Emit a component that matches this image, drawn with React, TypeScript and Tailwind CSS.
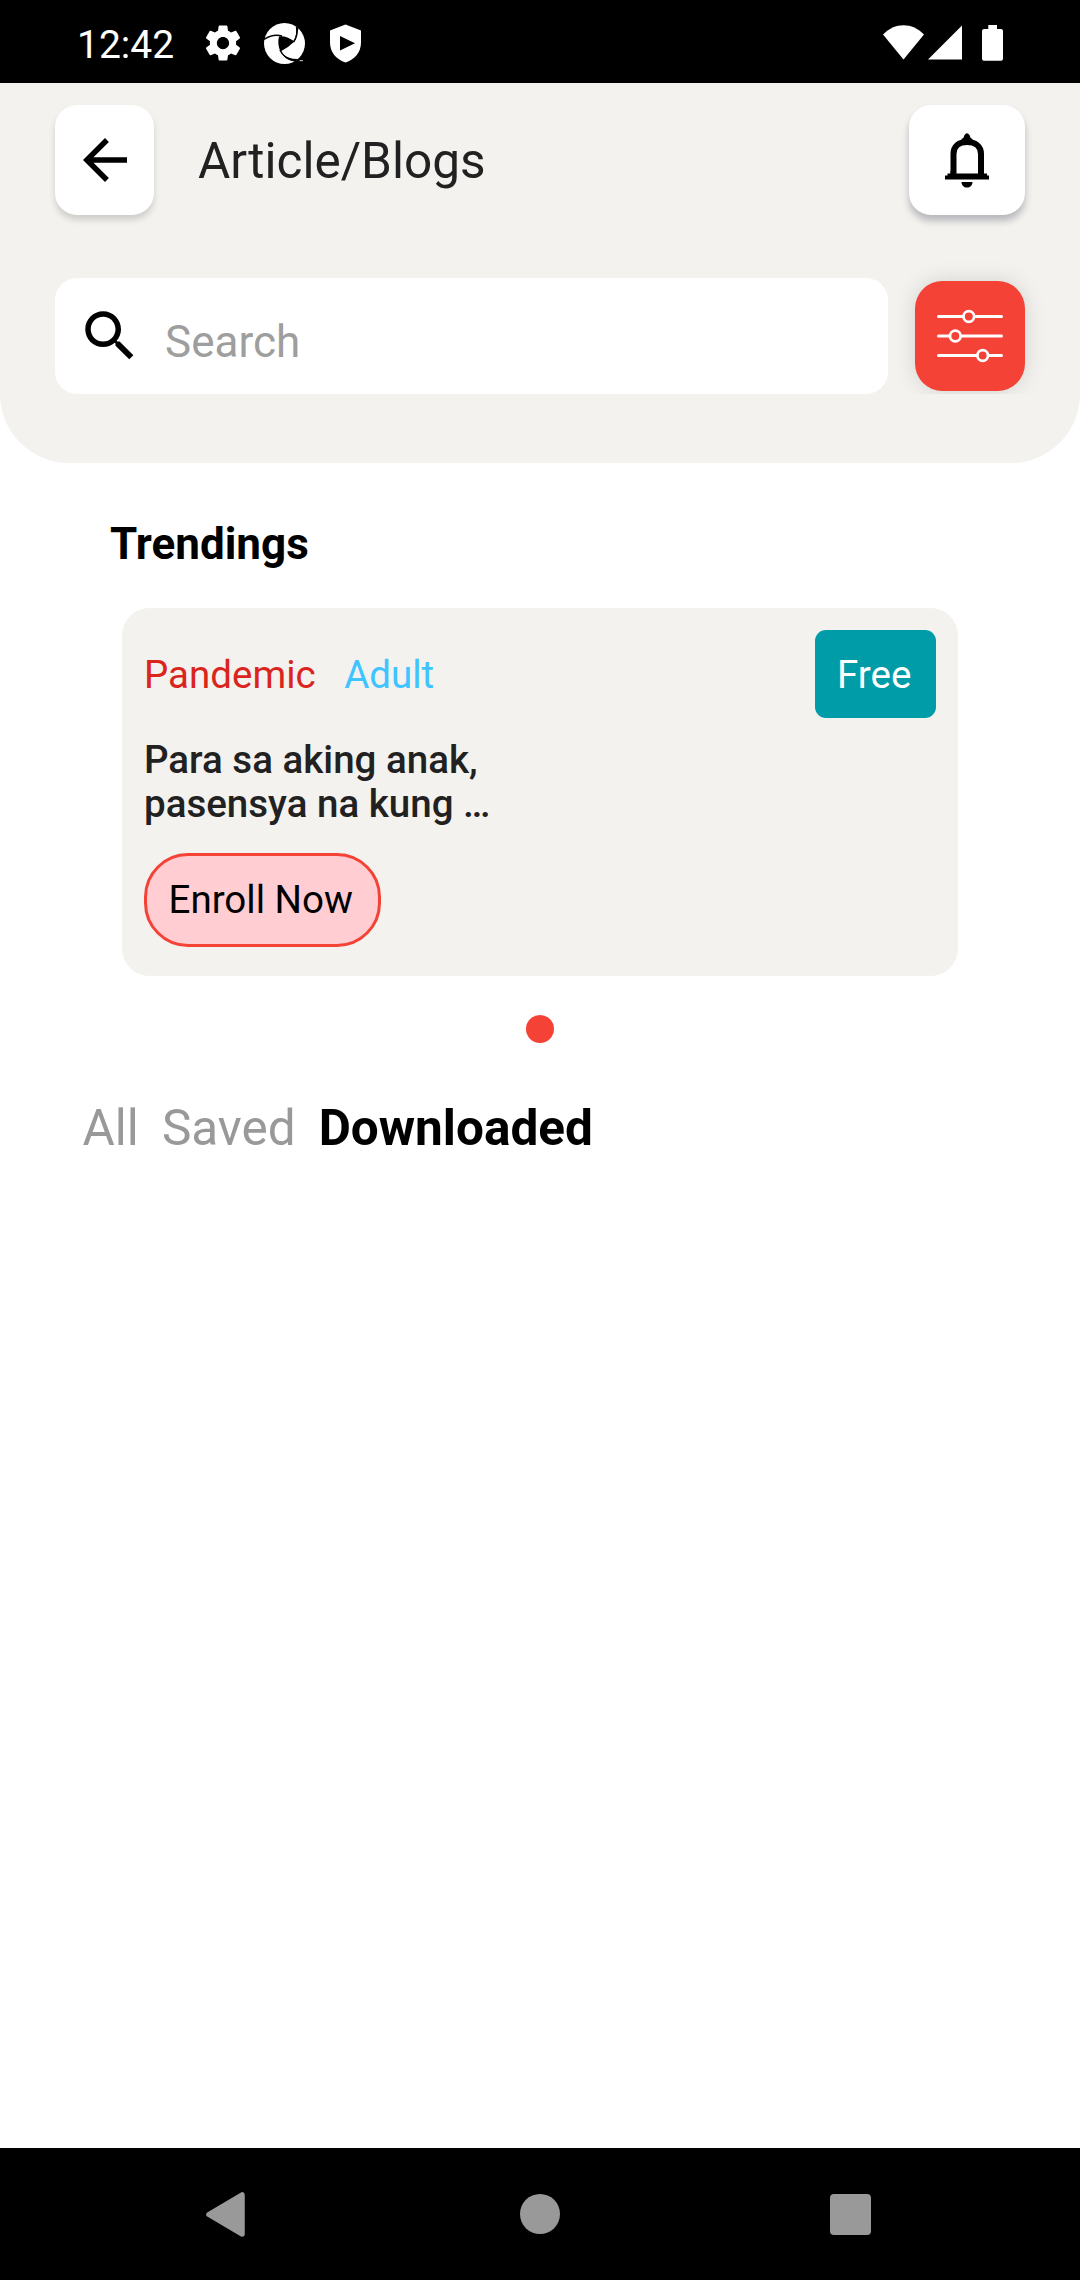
function StatusBar() {
  return (
    <div className="flex h-[83px] shrink-0 items-start bg-black text-white">
      <div className="ml-[77px] mt-[23px] w-[98px] text-[39px] leading-[45px] whitespace-nowrap">12:42</div>
      <svg className="ml-[27px] mt-[22px] h-[42px] w-[42px]" viewBox="0 0 24 24" fill="currentColor">
        <path d="M19.43 12.98c.04-.32.07-.64.07-.98s-.03-.66-.07-.98l2.11-1.65c.19-.15.24-.42.12-.64l-2-3.46c-.12-.22-.39-.3-.61-.22l-2.49 1c-.52-.4-1.08-.73-1.69-.98l-.38-2.65C14.46 2.18 14.25 2 14 2h-4c-.25 0-.46.18-.49.42l-.38 2.65c-.61.25-1.17.59-1.69.98l-2.49-1c-.23-.09-.49 0-.61.22l-2 3.46c-.13.22-.07.49.12.64l2.11 1.65c-.04.32-.07.65-.07.98s.03.66.07.98l-2.11 1.65c-.19.15-.24.42-.12.64l2 3.46c.12.22.39.3.61.22l2.49-1c.52.4 1.08.73 1.69.98l.38 2.65c.03.24.24.42.49.42h4c.25 0 .46-.18.49-.42l.38-2.65c.61-.25 1.17-.59 1.69-.98l2.49 1c.23.09.49 0 .61-.22l2-3.46c.12-.22.07-.49-.12-.64l-2.11-1.65zM12 15.5c-1.93 0-3.500-1.57-3.500-3.500s1.570-3.500 3.500-3.500 3.500 1.570 3.500 3.500-1.570 3.500-3.500 3.500z" />
      </svg>
      <svg className="ml-[20px] mt-[23px] h-[41px] w-[41px]" viewBox="0 0 41 41">
        <circle cx="20.500" cy="20.500" r="20.500" fill="#fff" />
        <path d="M15 13.500Q22 12.500 30.500 18.500Q25 24 16.500 28.500Q13 21 15 13.500Z" fill="#000" />
        <g fill="none" stroke="#000" strokeWidth="1.500">
          <path d="M0 16.500Q9 10.500 18 13" />
          <path d="M32.500 4Q34.500 12 29.500 19" />
          <path d="M16 27Q20 36 31.500 38" />
        </g>
        <path d="M32 4L34.500 5.500L31.500 17L30 18Q33 11 32 4Z" fill="#000" />
        <path d="M18 30Q23 36 34 36L31 38.500Q21 37 18 30Z" fill="#000" />
        <rect x="35.500" y="37" width="3.500" height="1.200" fill="#aaa" />
      </svg>
      <svg className="ml-[25px] mt-[24px] h-[39px] w-[31px]" viewBox="0 0 31 39">
        <path d="M15.500.5L31 6.500V18.500C31 28.500 24.500 35.500 15.500 38.500C6.500 35.500 0 28.500 0 18.500V6.500Z" fill="#fff" />
        <path d="M10 12L25 19.300L10 26.500Z" fill="#000" />
      </svg>
      <div className="grow" />
      <svg className="mt-[25px] h-[35px] w-[41px]" viewBox="0 0 41 35">
        <path d="M0 9.500C11.500-3 29.500-3 41 9.500L20.500 34.500Z" fill="#fff" />
      </svg>
      <svg className="ml-[4px] mt-[25px] h-[35px] w-[34px]" viewBox="0 0 34 35">
        <path d="M0 34.500L34 .5V34.500Z" fill="#fff" />
      </svg>
      <svg className="ml-[20px] mr-[77px] mt-[25px] h-[36px] w-[21px]" viewBox="0 0 21 36">
        <path d="M6.300 0H15V4H19a2 2 0 0 1 2 2V33.700a2 2 0 0 1-2 2H2a2 2 0 0 1-2-2V6a2 2 0 0 1 2-2H6.300Z" fill="#fff" />
      </svg>
    </div>
  );
}

function Header() {
  return (
    <header className="h-[379.5px] shrink-0 rounded-b-[69px] bg-[#f3f2ee] px-[55px] pt-[22px]">
      <div className="flex h-[110px] items-center">
        <button className="flex h-[110px] w-[99px] items-center justify-center rounded-[22px] bg-white shadow-[0_5px_6px_rgba(0,0,0,0.15)]">
          <svg className="h-[66px] w-[66px]" viewBox="0 0 24 24">
            <path d="M20 11H7.830l5.590-5.590L12 4l-8 8 8 8 1.410-1.410L7.830 13H20v-2z" />
          </svg>
        </button>
        <h1 className="ml-[44px] pt-[2px] text-[49.5px] leading-[58px] text-[#212121]">Article/Blogs</h1>
        <button className="ml-auto flex h-[110px] w-[116px] items-center justify-center rounded-[22px] bg-white shadow-[0_6px_7px_rgba(20,20,50,0.26)]">
          <svg className="h-[56px] w-[44px]" viewBox="0 0 44 56">
            <path d="M8.500 43V22C8.500 14 14 10 22 10S36 14 36 22V43" fill="none" stroke="#000" strokeWidth="6" />
            <path d="M16.500 10V7Q19 6 19.500 3Q22-.5 24.500 3Q25 6 27.500 7V10Z" />
            <path d="M0 47.500V43.500H2.500V41.500H5.500V39H10V41.500H34V39H38.500V41.500H42V43.500H44.500V47.500Z" />
            <path d="M16.500 50H27.500C27.500 53.500 25 55.500 22 55.500S16.500 53.500 16.500 50Z" />
          </svg>
        </button>
      </div>
      <div className="-mx-[55px] mt-[43px] flex h-[136px] items-start overflow-hidden px-[55px] pt-[20px]">
        <label className="flex h-[115.5px] w-[832.5px] items-start rounded-[22px] bg-white">
          <svg className="ml-[22px] mt-[25px] h-[66px] w-[66px] shrink-0" viewBox="0 0 24 24">
            <path d="M15.500 14h-.79l-.28-.27C15.410 12.590 16 11.110 16 9.500 16 5.910 13.090 3 9.500 3S3 5.910 3 9.500 5.910 16 9.500 16c1.610 0 3.090-.59 4.230-1.570l.27.28v.79l5 4.990L20.490 19l-4.990-5zm-6 0C7.010 14 5 11.990 5 9.500S7.010 5 9.500 5 14 7.010 14 9.500 11.990 14 9.500 14z" />
          </svg>
          <input
            className="ml-[22px] mt-[38px] h-[52px] w-[600px] bg-transparent text-[44px] leading-[52px] outline-none placeholder:text-[#9e9e9e]"
            placeholder="Search"
          />
        </label>
        <button className="ml-[27.5px] mt-[3px] h-[110px] w-[110px] rounded-[27.5px] bg-[#f44336] shadow-[0_0_22px_rgba(0,0,0,0.13)]">
          <svg className="h-[110px] w-[110px]" viewBox="0 0 110 110" fill="#f44336" stroke="#fff">
            <path d="M23.500 35.500H86.500M23.500 55H86.500M23.500 74.500H86.500" strokeWidth="3" strokeLinecap="round" />
            <g strokeWidth="2.700">
              <circle cx="53.800" cy="35.500" r="5.300" />
              <circle cx="40.300" cy="55" r="5.300" />
              <circle cx="67.700" cy="74.500" r="5.300" />
            </g>
          </svg>
        </button>
      </div>
    </header>
  );
}

function TrendingCard() {
  return (
    <article className="mx-[122px] mt-[38px] flex h-[368px] flex-col items-start rounded-[27.5px] bg-[#f3f2ee] px-[22px] pt-[22px] text-[38.5px] leading-[44px]">
      <div className="flex h-[88px] w-full items-center">
        <span className="pt-[2px] text-[#da251d]">Pandemic</span>
        <span className="ml-[28.5px] pt-[2px] text-[#40c4ff]">Adult</span>
        <span className="ml-auto flex h-[88px] w-[121px] items-center rounded-[11px] bg-[#009ca8] pt-[2px] pl-[22px] text-white">Free</span>
      </div>
      <p className="mt-[20px] w-[360px] font-medium text-[#212121]">
        Para sa aking anak,
        <br />
        pasensya na kung …
      </p>
      <button className="mt-[26.5px] flex h-[94px] w-[236.5px] items-center rounded-[44px] border-3 border-[#f44336] bg-[#ffcdd2] pl-[21.5px] text-black">
        Enroll Now
      </button>
    </article>
  );
}

function NavBar() {
  return (
    <nav className="mt-auto flex h-[132px] shrink-0 items-start bg-black">
      <svg className="ml-[206px] mt-[44px] h-[45px] w-[39px]" viewBox="0 0 39 45">
        <path d="M3 22.500L36 3V42Z" fill="#999" stroke="#999" strokeWidth="5.500" strokeLinejoin="round" />
      </svg>
      <div className="ml-[275px] mt-[46px] h-[40px] w-[40px] rounded-full bg-[#999]" />
      <div className="ml-[270px] mt-[46px] h-[41px] w-[41px] rounded-[4px] bg-[#999]" />
    </nav>
  );
}

export default function App() {
  return (
    <div className="flex h-[2280px] w-[1080px] flex-col overflow-hidden bg-white font-['Roboto',sans-serif]">
      <StatusBar />
      <Header />
      <h2 className="ml-[110px] mt-[55.5px] text-[44px] leading-[52px] font-bold text-black">Trendings</h2>
      <TrendingCard />
      <div className="mx-auto mt-[39px] h-[28px] w-[28px] rounded-full bg-[#f44336]" />
      <div className="ml-[82.5px] mt-[56px] flex gap-[23px] text-[49.5px] leading-[58px] text-[#999]">
        <span>All</span>
        <span>Saved</span>
        <span className="font-bold text-black">Downloaded</span>
      </div>
      <NavBar />
    </div>
  );
}
